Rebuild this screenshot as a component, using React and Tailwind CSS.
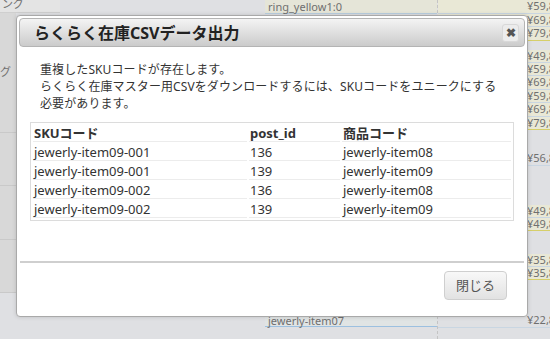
import React from 'react';

const dupes = [
  ['jewerly-item09-001', '136', 'jewerly-item08'],
  ['jewerly-item09-001', '139', 'jewerly-item09'],
  ['jewerly-item09-002', '136', 'jewerly-item08'],
  ['jewerly-item09-002', '139', 'jewerly-item09'],
];

// price cells visible to the right of the dialog
const prices = [
  { v: '¥59,8', h: 'h-[14px]' },
  { v: '¥69,8', h: 'h-[13px]' },
  { v: '¥79,8', h: 'h-[14px]', last: true },
  { gap: 'h-[9px]' },
  { v: '¥49,8', h: 'h-[13px]' },
  { v: '¥59,8', h: 'h-[13px]' },
  { v: '¥69,8', h: 'h-[14px]' },
  { v: '¥59,8', h: 'h-[13px]' },
  { v: '¥69,8', h: 'h-[14px]' },
  { v: '¥79,8', h: 'h-[13px]', last: true },
  { gap: 'h-[22px]' },
  { v: '¥56,8', h: 'h-[14px]', plain: true },
  { gap: 'h-[39px]' },
  { v: '¥49,8', h: 'h-[13px]' },
  { v: '¥49,8', h: 'h-[13px]', last: true },
  { gap: 'h-[23px]' },
  { v: '¥35,8', h: 'h-[13px]' },
  { v: '¥35,8', h: 'h-[13px]', last: true },
  { gap: 'h-[34px]' },
  { v: '¥22,8', h: 'h-[14px]', plain: true },
];

function Backdrop() {
  return (
    <div className="flex h-[339px] w-[550px] overflow-hidden bg-[#dfe0e3] text-[11px] text-[#6f6f6f]">
      <div className="flex w-[265px] shrink-0 flex-col">
        <div className="h-[13px] w-[60px] border-b border-[#cfcfcf] bg-[#e4e4e4] pl-[2px] leading-[8px]">ング</div>
        <div className="flex h-[120px] w-[16px] items-center border-b border-[#c9c9c9] bg-[#d8d8d8]">グ</div>
        <div className="h-[53px] w-[16px] border-b border-[#c9c9c9] bg-[#d8d8d8]" />
        <div className="h-[54px] w-[16px] border-b border-[#c9c9c9] bg-[#d8d8d8]" />
        <div className="h-[53px] w-[16px] border-b border-[#c9c9c9] bg-[#d8d8d8]" />
      </div>
      <div className="flex w-[173px] shrink-0 flex-col border-r border-dashed border-[#c4c4c4]">
        <div className="h-[14px] border-b border-[#b9cfe0] bg-[#e5e5d8] pl-[3px] leading-[14px]">ring_yellow1:0</div>
        <div className="flex-1" />
        <div className="mb-[12px] h-[12px] border-b border-[#9cc0e0] bg-[#e0e4e4] pl-[3px] leading-[11px]">jewerly-item07</div>
      </div>
      <div className="flex flex-1 flex-col">
        {prices.map((p, i) =>
          p.gap ? (
            <div key={i} className={p.gap} />
          ) : (
            <div
              key={i}
              className={`${p.h} pl-[89px] leading-[12px] ${p.plain ? '' : 'bg-[#e9e8d6]'} ${p.last ? 'border-b border-[#d6cf6a]' : 'border-b border-[#c9d6e2]'}`}
            >
              {p.v}
            </div>
          )
        )}
      </div>
    </div>
  );
}

export default function App() {
  return (
    <div className="relative h-[339px] w-[550px] overflow-hidden font-['Noto_Sans','Noto_Sans_CJK_JP',sans-serif]">
      <Backdrop />
      <div className="absolute left-[16px] top-[15px] flex h-[302px] w-[512px] flex-col rounded-[4px] border border-[#a9a9a9] bg-white p-[2px] shadow-[0_0_4px_rgba(0,0,0,0.15)]">
        <div className="flex h-[29px] items-center justify-between rounded-[4px] border border-[#b4b4b4] bg-gradient-to-b from-[#f4f4f4] to-[#cbcbcb] pl-[14px] pr-[5px]">
          <span className="text-[16px] font-bold text-[#222]">らくらく在庫CSVデータ出力</span>
          <button className="flex h-[18px] w-[17px] items-center justify-center rounded-[3px] border border-[#d8d8d8] bg-[#ececec] text-[12px] font-bold leading-none text-[#555]">✖</button>
        </div>
        <div className="flex-1 px-[11px] pt-[14px]">
          <p className="pl-[10px] text-[12px] leading-[17px] tracking-[0.1px] text-[#333]">
            重複したSKUコードが存在します。<br />
            らくらく在庫マスター用CSVをダウンロードするには、SKUコードをユニークにする<br />
            必要があります。
          </p>
          <table className="mt-[10px] w-full border-separate border-spacing-[2px] border border-[#dcdcdc] text-left text-[13px] leading-[16px] text-[#333]">
            <thead>
              <tr>
                <th className="h-[17px] w-[214px] border-b border-[#ececec] px-[1px] font-bold">SKUコード</th>
                <th className="h-[17px] w-[91px] border-b border-[#ececec] px-[1px] font-bold">post_id</th>
                <th className="h-[17px] border-b border-[#ececec] px-[1px] font-bold">商品コード</th>
              </tr>
            </thead>
            <tbody>
              {dupes.map((r, i) => (
                <tr key={i}>
                  {r.map((c, j) => (
                    <td key={j} className="h-[17px] border-b border-[#ececec] px-[1px] font-normal">{c}</td>
                  ))}
                </tr>
              ))}
            </tbody>
          </table>
        </div>
        <div className="mx-[1px] border-t-2 border-[#cfcfcf]" />
        <div className="flex h-[51px] items-start justify-end pr-[18px] pt-[8px]">
          <button className="h-[29px] w-[63px] rounded-[4px] border border-[#cfcfcf] bg-gradient-to-b from-[#f8f8f8] to-[#e2e2e2] text-[13px] text-[#555]">閉じる</button>
        </div>
      </div>
    </div>
  );
}
